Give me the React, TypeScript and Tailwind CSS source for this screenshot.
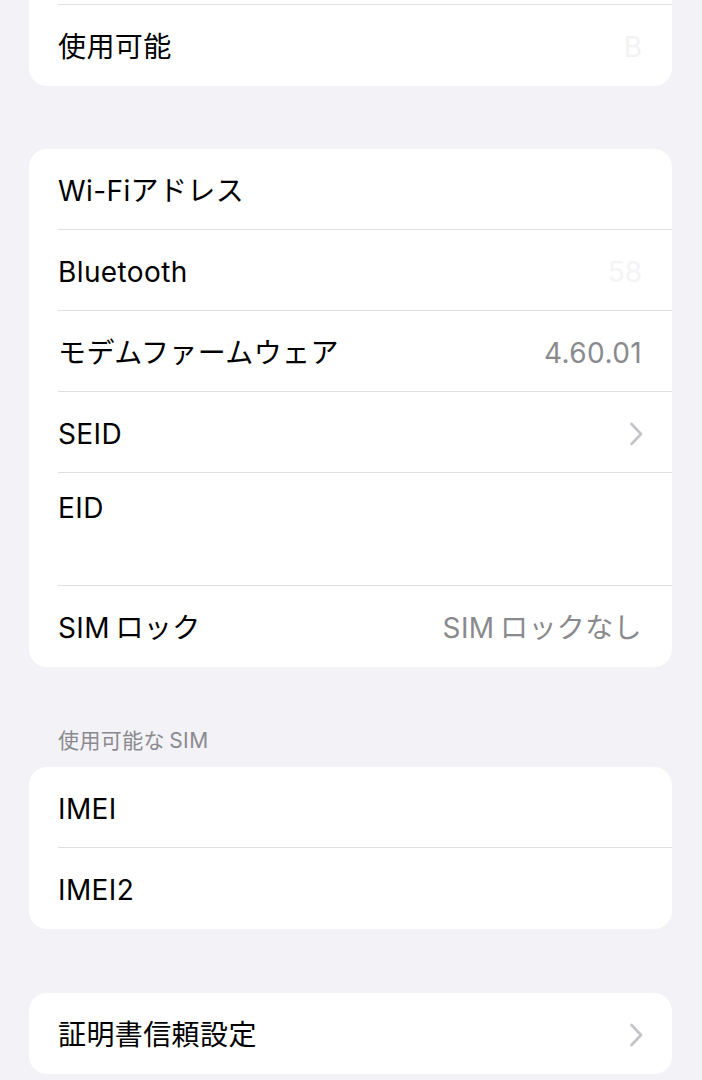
import React from 'react'

type Row = {
  label: string
  value?: string
  faint?: string
  chevron?: boolean
  tall?: boolean
}

const font = { fontFamily: 'Inter, "Noto Sans CJK JP", sans-serif' }

function Chevron() {
  return (
    <svg width="14" height="24" viewBox="0 0 14 24" fill="none" className="shrink-0 mr-[-1px]">
      <path d="M2.5 2l9.5 10-9.5 10" stroke="#c4c4c8" strokeWidth="2.6" strokeLinecap="round" strokeLinejoin="round" />
    </svg>
  )
}

function SettingRow({ row, last }: { row: Row; last: boolean }) {
  return (
    <div className="pl-[29px]">
      <div
        className={`flex pr-[30px] ${row.tall ? 'h-[113px] items-start pt-[18px]' : 'h-[81px] items-center pt-[3px]'} ${
          last ? '' : 'border-b border-[#dfdfe2]'
        }`}
      >
        <span className="text-[28px] leading-[34px] text-black tracking-[0.4px]">{row.label}</span>
        <div className="ml-auto flex items-center">
          {row.value && <span className="text-[28px] leading-[34px] text-[#8a8a8e] tracking-[0.4px]">{row.value}</span>}
          {row.faint && <span className="text-[28px] leading-[34px] text-[#f4f4f6]">{row.faint}</span>}
          {row.chevron && <Chevron />}
        </div>
      </div>
    </div>
  )
}

function Card({ rows, className = '' }: { rows: Row[]; className?: string }) {
  return (
    <div className={`ml-[29px] mr-[30px] bg-white rounded-[18px] overflow-hidden ${className}`}>
      {rows.map((r, i) => (
        <SettingRow key={r.label} row={r} last={i === rows.length - 1} />
      ))}
    </div>
  )
}

export default function App() {
  return (
    <div className="min-h-[1080px] w-full bg-[#f2f2f7] overflow-hidden" style={font}>
      {/* card cut off at the top */}
      <div className="ml-[29px] mr-[30px] bg-white rounded-b-[18px]">
        <div className="pl-[29px]">
          <div className="h-[5px] border-b border-[#dfdfe2]" />
        </div>
        <div className="flex h-[81px] items-center pt-[3px] pl-[29px] pr-[30px]">
          <span className="text-[28px] leading-[34px] text-black tracking-[0.4px]">使用可能</span>
          <span className="ml-auto text-[28px] leading-[34px] text-[#f2f2f4]">B</span>
        </div>
      </div>

      <Card
        className="mt-[63px]"
        rows={[
          { label: 'Wi-Fiアドレス' },
          { label: 'Bluetooth', faint: '58' },
          { label: 'モデムファームウェア', value: '4.60.01' },
          { label: 'SEID', chevron: true },
          { label: 'EID', tall: true },
          { label: 'SIM\u2009ロック', value: 'SIM\u2009ロックなし' },
        ]}
      />

      <div className="mt-[62px] mb-[14px] pl-[58px] text-[21px] leading-[24px] text-[#8a8a8e] tracking-[0.4px]">
        使用可能な{'\u2009'}SIM
      </div>

      <Card
        rows={[
          { label: 'IMEI' },
          { label: 'IMEI2' },
        ]}
      />

      <Card className="mt-[64px]" rows={[{ label: '証明書信頼設定', chevron: true }]} />
    </div>
  )
}
